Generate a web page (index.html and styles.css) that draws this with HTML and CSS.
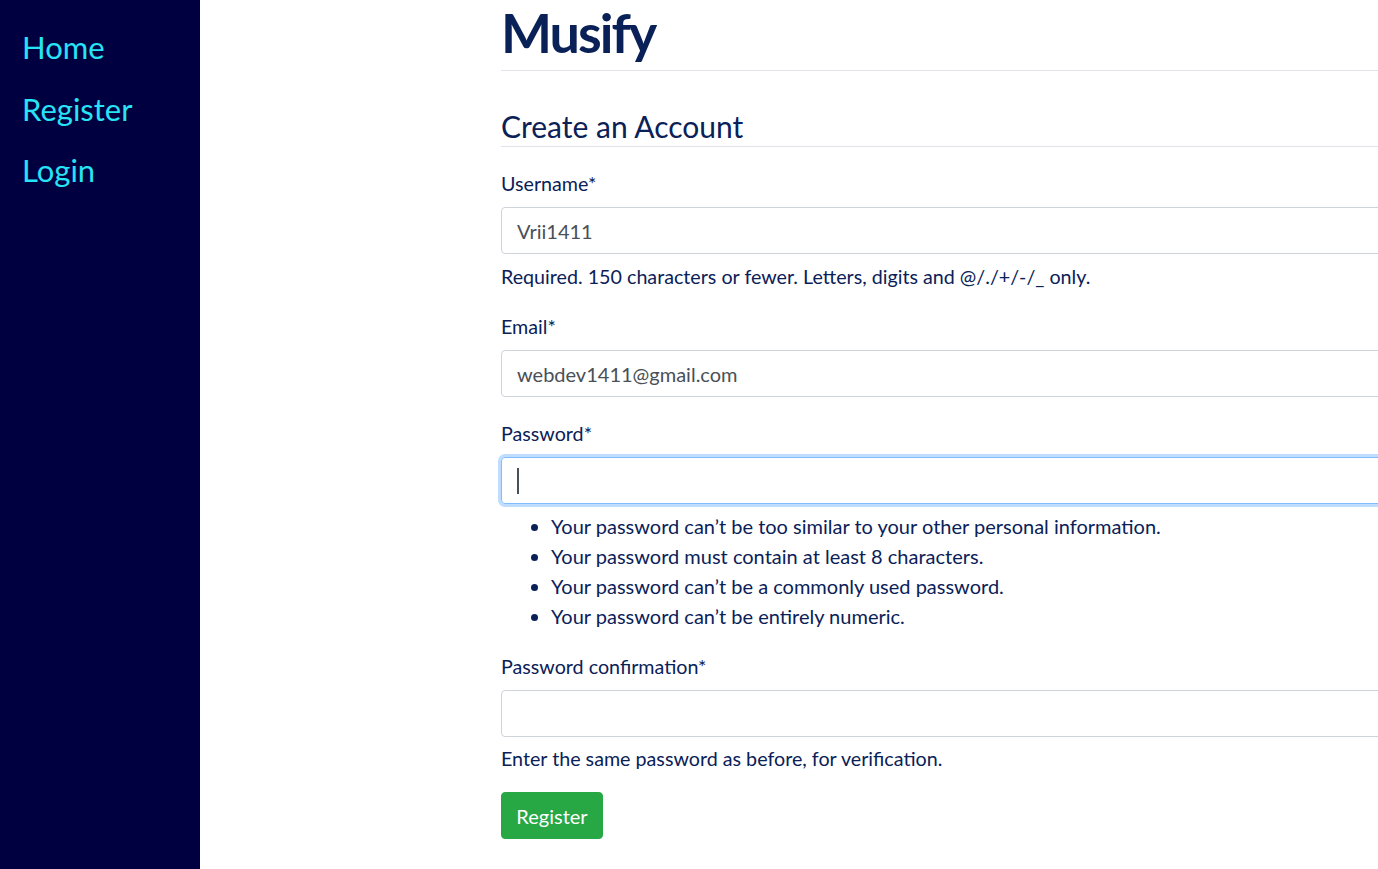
FILE: index.html
```html
<!DOCTYPE html>
<html>
<head>
<meta charset="utf-8">
<title>Musify - Register</title>
<link rel="stylesheet" href="styles.css">
</head>
<body>
<div class="layout">
  <nav class="sidebar">
    <a href="#" class="nav-link">Home</a>
    <a href="#" class="nav-link">Register</a>
    <a href="#" class="nav-link">Login</a>
  </nav>
  <main class="main">
    <h1 class="brand">Musify</h1>
    <form class="form">
      <h2 class="legend">Create an Account</h2>
      <div class="group">
        <label class="label">Username*</label>
        <div class="input">Vrii1411</div>
        <small class="help">Required. 150 characters or fewer. Letters, digits and @/./+/-/_ only.</small>
      </div>
      <div class="group">
        <label class="label">Email*</label>
        <div class="input">webdev1411@gmail.com</div>
      </div>
      <div class="group">
        <label class="label">Password*</label>
        <div class="input focus"><span class="caret"></span></div>
        <ul class="rules">
          <li>Your password can’t be too similar to your other personal information.</li>
          <li>Your password must contain at least 8 characters.</li>
          <li>Your password can’t be a commonly used password.</li>
          <li>Your password can’t be entirely numeric.</li>
        </ul>
      </div>
      <div class="group last">
        <label class="label">Password confirmation*</label>
        <div class="input"></div>
        <small class="help">Enter the same password as before, for verification.</small>
      </div>
      <button type="button" class="btn">Register</button>
    </form>
  </main>
</div>
</body>
</html>
```
FILE: styles.css
```css
html, body {
  margin: 0;
  padding: 0;
  overflow: hidden;
  background: #fff;
}
body {
  font-family: "Lato", "Open Sans", sans-serif;
  color: #0a2158;
}
.layout {
  display: flex;
  min-height: 869px;
}
.sidebar {
  width: 200px;
  flex: 0 0 200px;
  background: #000040;
  display: flex;
  flex-direction: column;
  padding: 27px 0 0 22px;
  box-sizing: border-box;
  gap: 21.5px;
}
.nav-link {
  color: #27e3f5;
  text-decoration: none;
  font-size: 31px;
  line-height: 40px;
}
.main {
  flex: 0 0 1100px;
  margin-left: 301px;
}
.brand {
  margin: 0;
  font-size: 54px;
  letter-spacing: -2px;
  font-weight: 700;
  line-height: 66px;
  padding-bottom: 4px;
  border-bottom: 1px solid #e2e3ea;
  color: #0a2158;
}
.form {
  padding-top: 36px;
}
.legend {
  margin: 0 0 23px;
  font-weight: 400;
  font-size: 30px;
  line-height: 38px;
  padding-bottom: 1px;
  border-bottom: 1px solid #e2e3ea;
}
.group {
  margin-bottom: 23px;
}
.group.last {
  margin-bottom: 20px;
}
.label {
  display: block;
  font-size: 19.7px;
  line-height: 28px;
  margin-bottom: 9px;
}
.input {
  height: 47px;
  box-sizing: border-box;
  border: 1px solid #ced4da;
  border-radius: 4px;
  padding: 1px 15px 0;
  font-size: 20px;
  line-height: 45px;
  color: #495057;
}
.input.focus {
  border-color: #80bdff;
  box-shadow: 0 0 0 3px rgba(0, 123, 255, 0.25);
  display: flex;
  align-items: center;
}
.caret {
  display: inline-block;
  width: 2px;
  height: 26px;
  background: #495057;
}
.help {
  display: block;
  font-size: 19.7px;
  line-height: 26px;
  margin-top: 10px;
}
.last .help {
  margin-top: 9px;
}
.rules {
  margin: 7px 0 -1px;
  padding-left: 50px;
  font-size: 20px;
  line-height: 30px;
}
.btn {
  font-family: inherit;
  font-size: 20px;
  color: #fff;
  background: #28a745;
  border: 1px solid #28a745;
  border-radius: 4px;
  height: 47px;
  width: 102px;
  padding: 0;
  cursor: pointer;
}
```
